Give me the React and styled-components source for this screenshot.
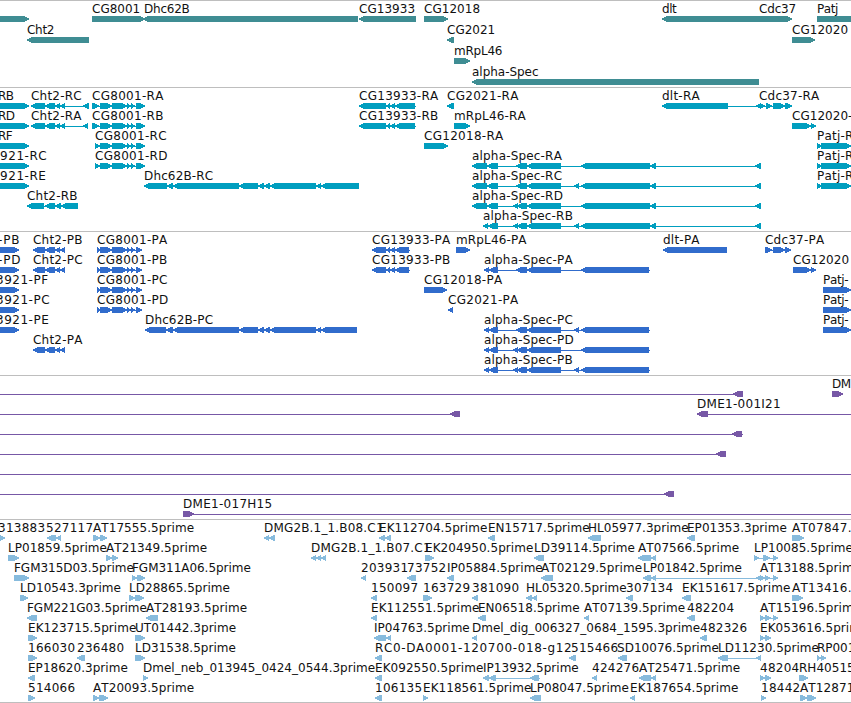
import React from "react";
import styled, { createGlobalStyle } from "styled-components";

const trackTheme = {
  gene: "#3f8d93",
  transcript: "#009ebf",
  protein: "#316ccc",
  clone: "#7758a6",
  est: "#87bbdd",
};

const GlobalStyle = createGlobalStyle`
  body {
    margin: 0;
    background-color: white;
    overflow: hidden;
  }
`;

const StyledBrowser = styled.main`
  display: flex;
  flex-direction: column;
  width: 851px;
  height: 703px;
  overflow: hidden;
  font-family: "DejaVu Sans", sans-serif;
  font-size: 12px;
  font-kerning: none;
  color: black;
`;

const StyledTrack = styled.section`
  box-sizing: border-box;
  flex: none;
  padding-bottom: ${({ $gap }) => $gap}px;
  border-top: 1px solid #bebebe;
  color: ${({ $kind }) => trackTheme[$kind]};
`;

const StyledRow = styled.div`
  display: grid;
  grid-template-rows: 15px 6px;
  height: ${({ $height }) => $height}px;
`;

const StyledLabels = styled.div`
  display: grid;
  grid-template-columns: 851px;
`;

const StyledLabel = styled.span`
  grid-area: 1 / 1;
  justify-self: start;
  line-height: 16px;
  height: 15px;
  color: #111;
  white-space: nowrap;
`;

const StyledGlyphs = styled.svg`
  display: block;
  width: 851px;
  height: 6px;
  fill: currentColor;
  shape-rendering: crispEdges;
`;

const StyledFooter = styled.footer`
  flex: none;
  height: 1px;
  background-color: #bebebe;
`;

// a label starts at x, the thin intron line runs between from and to
const f = (label, x, strand, exons, from, to) => ({
  label,
  x,
  strand,
  exons,
  from: from ?? exons[0][0] + 1,
  to: to ?? exons[exons.length - 1][1] - 1,
});

const cht2 = [[45, 55], [55, 60], [60, 65]];
const cg8001 = [[112, 127], [127, 131], [131, 135]];
const dhc = [[173, 239], [239, 258], [258, 264], [264, 270], [270, 316], [316, 321]];
const cg13933 = [[386, 390], [390, 395]];
const specTail = [[581, 650], [650, 656], [755, 761]];
const left = (label, x, end) => f(label, x, ">", [[-20, end]]);
const cg8001Rna = (label, x) =>
  f(label, x, ">", [[x, x === 92 ? 99 : 100], [100, 112], ...cg8001, [136, 145]]);
const cg8001Prot = (label) =>
  f(label, 97, ">", [[97, 101], [100, 112], ...cg8001, [136, 142]]);
const patj = () => f("Patj-R", 817, ">", [[817, 822], [821, 851]]);
const patjProt = () => f("Patj-", 823, ">", [[823, 851]]);

const tracks = [
  {
    kind: "gene",
    rowHeight: 21,
    gap: 2,
    rows: [
      [
        left("", 0, 29),
        f("CG8001", 92, ">", [[92, 145]]),
        f("Dhc62B", 144, "<", [[143, 358]]),
        f("CG13933", 359, "<", [[359, 416]]),
        f("CG12018", 424, ">", [[424, 448]]),
        f("dlt", 662, "<", [[662, 762]]),
        f("Cdc37", 759, ">", [[759, 792]]),
        f("Patj", 817, ">", [[817, 900]]),
      ],
      [
        f("Cht2", 27, "<", [[27, 89]]),
        f("CG2021", 447, "<", [[447, 454]]),
        f("CG12020", 792, ">", [[792, 815]]),
      ],
      [f("mRpL46", 454, ">", [[454, 470]])],
      [f("alpha-Spec", 472, "<", [[472, 759]])],
    ],
  },
  {
    kind: "transcript",
    rowHeight: 20,
    gap: 3,
    rows: [
      [
        left("RB", -2, 29),
        f("Cht2-RC", 31, "<", [[31, 45], ...cht2, [83, 89]]),
        cg8001Rna("CG8001-RA", 92),
        f("CG13933-RA", 359, "<", [[359, 386], ...cg13933, [395, 415]], 360, 416),
        f("CG2021-RA", 447, "<", [[447, 454]]),
        f("dlt-RA", 662, "<", [[662, 728], [756, 761]]),
        f("Cdc37-RA", 759, ">", [[760, 765], [766, 772], [773, 785], [785, 792]]),
      ],
      [
        left("RD", -2, 29),
        f("Cht2-RA", 31, "<", [[31, 45], ...cht2, [83, 88]]),
        cg8001Rna("CG8001-RB", 92),
        f("CG13933-RB", 359, "<", [[359, 386], ...cg13933, [395, 415]], 360, 416),
        f("mRpL46-RA", 454, ">", [[454, 470]]),
        f("CG12020-", 792, ">", [[792, 811], [811, 816]]),
      ],
      [
        left("RF", -2, 29),
        cg8001Rna("CG8001-RC", 95),
        f("CG12018-RA", 424, ">", [[424, 448]]),
        patj(),
      ],
      [
        left("921-RC", 0, 29),
        cg8001Rna("CG8001-RD", 95),
        f("alpha-Spec-RA", 472, "<", [[472, 487], [487, 498], [516, 527], [527, 561], ...specTail]),
        patj(),
      ],
      [
        left("921-RE", 0, 29),
        f("Dhc62B-RC", 144, "<", [[144, 167], [167, 173], ...dhc, [321, 359]]),
        f("alpha-Spec-RC", 472, "<", [[472, 487], [487, 498], [516, 527], [527, 561], [574, 579], ...specTail]),
        patj(),
      ],
      [
        f("Cht2-RB", 27, "<", [[27, 44], [45, 55], [55, 61], [61, 78]]),
        f("alpha-Spec-RD", 472, "<", [[472, 487], [487, 498], [513, 518], [517, 527], [527, 561], ...specTail]),
      ],
      [
        f("alpha-Spec-RB", 483, "<", [[483, 488], [488, 498], [513, 518], [517, 527], [527, 561], [574, 579], ...specTail]),
      ],
    ],
  },
  {
    kind: "protein",
    rowHeight: 20,
    gap: 3,
    rows: [
      [
        left("-PB", -2, 19),
        f("Cht2-PB", 33, "<", [[33, 45], ...cht2]),
        cg8001Prot("CG8001-PA"),
        f("CG13933-PA", 372, "<", [[372, 386], ...cg13933, [395, 409]], 373, 410),
        f("mRpL46-PA", 456, ">", [[456, 470]]),
        f("dlt-PA", 663, "<", [[663, 727]]),
        f("Cdc37-PA", 765, ">", [[765, 772], [773, 785], [785, 791]]),
      ],
      [
        left("-PD", -2, 19),
        f("Cht2-PC", 33, "<", [[33, 45], ...cht2]),
        cg8001Prot("CG8001-PB"),
        f("CG13933-PB", 372, "<", [[372, 386], ...cg13933, [395, 409]], 373, 410),
        f("alpha-Spec-PA", 484, "<", [[484, 489], [489, 498], [516, 527], [527, 561], [581, 649]], 485, 650),
        f("CG12020", 793, ">", [[793, 811], [811, 816]]),
      ],
      [
        left("3921-PF", -4, 19),
        cg8001Prot("CG8001-PC"),
        f("CG12018-PA", 424, ">", [[424, 447]]),
        patjProt(),
      ],
      [
        left("3921-PC", -4, 19),
        cg8001Prot("CG8001-PD"),
        f("CG2021-PA", 448, "<", [[448, 453]]),
        patjProt(),
      ],
      [
        left("3921-PE", -4, 19),
        f("Dhc62B-PC", 145, "<", [[145, 166], [166, 173], ...dhc, [321, 357]]),
        f("alpha-Spec-PC", 484, "<", [[484, 489], [489, 498], [516, 527], [527, 561], [574, 579], [581, 649]], 485, 650),
        patjProt(),
      ],
      [
        f("Cht2-PA", 33, "<", [[33, 45], ...cht2]),
        f("alpha-Spec-PD", 484, "<", [[484, 489], [489, 498], [513, 518], [517, 527], [527, 561], [581, 649]], 485, 650),
      ],
      [
        f("alpha-Spec-PB", 484, "<", [[484, 489], [489, 498], [513, 518], [517, 527], [527, 561], [574, 579], [581, 649]], 485, 650),
      ],
    ],
  },
  {
    kind: "clone",
    rowHeight: 20,
    gap: 3,
    rows: [
      [
        f("", 0, "<", [[733, 743]], 0),
        f("DM", 832, ">", [[832, 843]]),
      ],
      [
        f("", 0, "<", [[450, 460]], 0),
        f("DME1-001I21", 697, "<", [[697, 708]], 698, 851),
      ],
      [f("", 0, "<", [[732, 742]], 0, 743)],
      [f("", 0, "<", [[716, 726]], 0)],
      [f("", 0, "<", [], 0, 851)],
      [f("", 0, "<", [[664, 674]], 0)],
      [f("DME1-017H15", 183, ">", [[183, 194]], 184, 851)],
    ],
  },
  {
    kind: "est",
    rowHeight: 20,
    gap: 2,
    rows: [
      [
        f("313883", -2, ">", [[-10, 5]]),
        f("527117", 46, "<", [[47, 56], [56, 61]]),
        f("AT17555.5prime", 93, ">", [[93, 100], [100, 107]]),
        f("DMG2B.1_1.B08.C1", 264, "<", [[264, 269], [269, 275]]),
        f("EK112704.5prime", 379, "<", [[379, 385], [385, 391]]),
        f("EN15717.5prime", 488, "<", [[488, 495]]),
        f("HL05977.3prime", 588, "<", [[588, 601]]),
        f("EP01353.3prime", 687, "<", [[687, 695]]),
        f("AT07847.", 792, ">", [[792, 804]]),
      ],
      [
        f("LP01859.5prime", 8, ">", [[8, 19]]),
        f("AT21349.5prime", 106, ">", [[106, 112], [112, 118]]),
        f("DMG2B.1_1.B07.C1", 311, "<", [[311, 316], [316, 321], [321, 326]]),
        f("EK204950.5prime", 425, ">", [[425, 434]]),
        f("LD39114.5prime", 534, "<", [[534, 544]]),
        f("AT07566.5prime", 638, "<", [[638, 651], [651, 656]]),
        f("LP10085.5prime", 754, ">", [[754, 759], [763, 770], [773, 778]]),
      ],
      [
        f("FGM315D03.5prime", 14, ">", [[14, 29]]),
        f("FGM311A06.5prime", 132, ">", [[132, 137], [137, 145]]),
        f("203931", 361, "<", [[361, 366]]),
        f("73752", 407, "<", [[407, 416]]),
        f("IP05884.5prime", 447, "<", [[447, 454]]),
        f("AT02129.5prime", 541, "<", [[541, 553]]),
        f("LP01842.5prime", 643, "<", [[643, 651], [651, 656], [756, 761]]),
        f("AT13188.5prime", 760, ">", [[760, 765], [765, 770], [773, 778]]),
      ],
      [
        f("LD10543.3prime", 20, ">", [[20, 28]]),
        f("LD28865.5prime", 129, ">", [[129, 135], [135, 144]]),
        f("150097", 371, "<", [[371, 377]]),
        f("163729", 423, ">", [[423, 432]]),
        f("381090", 472, "<", [[472, 478]]),
        f("HL05320.5prime", 526, "<", [[526, 532], [532, 537]]),
        f("307134", 626, "<", [[626, 633]]),
        f("EK151617.5prime", 682, "<", [[682, 691]]),
        f("AT13416.", 792, ">", [[792, 803]]),
      ],
      [
        f("FGM221G03.5prime", 27, "<", [[27, 37]]),
        f("AT28193.5prime", 146, "<", [[146, 158]]),
        f("EK112551.5prime", 371, "<", [[371, 377]]),
        f("EN06518.5prime", 478, "<", [[478, 486]]),
        f("AT07139.5prime", 584, "<", [[584, 589]]),
        f("482204", 687, "<", [[687, 695]]),
        f("AT15196.5prime", 760, ">", [[760, 765], [765, 771], [773, 778]]),
      ],
      [
        f("EK123715.5prime", 28, ">", [[28, 37]]),
        f("UT01442.3prime", 135, ">", [[135, 145]]),
        f("IP04763.5prime", 374, "<", [[374, 386], [386, 391]]),
        f("Dmel_dig_006327_0684_1595.3prime", 472, "<", [[472, 477]]),
        f("482326", 700, "<", [[700, 707]]),
        f("EK053616.5prime", 760, ">", [[760, 765], [765, 771]]),
      ],
      [
        f("166030", 28, ">", [[28, 37]]),
        f("236480", 77, "<", [[77, 85]]),
        f("LD31538.5prime", 135, ">", [[135, 145]]),
        f("RC0-DA0001-120700-018-g12", 375, "<", [[375, 382]]),
        f("515466", 571, "<", [[569, 576]]),
        f("SD10076.5prime", 617, "<", [[618, 627]]),
        f("LD11230.5prime", 718, "<", [[718, 728], [756, 761]]),
        f("RP001", 817, ">", [[817, 821], [821, 826]]),
      ],
      [
        f("EP18620.3prime", 28, "<", [[28, 35]]),
        f("Dmel_neb_013945_0424_0544.3prime", 143, ">", [[143, 148]]),
        f("EK092550.5prime", 375, "<", [[375, 382]]),
        f("IP13932.5prime", 483, "<", [[483, 489], [489, 496], [530, 539]], 484, 540),
        f("424276", 592, "<", [[592, 597]]),
        f("AT25471.5prime", 639, "<", [[639, 651], [651, 656]]),
        f("48204", 760, ">", [[760, 765], [765, 771]]),
        f("RH40515", 799, ">", [[799, 808]]),
      ],
      [
        f("514066", 28, ">", [[28, 35]]),
        f("AT20093.5prime", 93, ">", [[93, 99], [99, 108]]),
        f("106135", 375, "<", [[375, 382]]),
        f("EK118561.5prime", 423, ">", [[423, 428]]),
        f("LP08047.5prime", 530, "<", [[530, 541]]),
        f("EK187654.5prime", 630, "<", [[630, 635]]),
        f("18442", 761, ">", [[761, 766]]),
        f("AT12871", 800, ">", [[800, 807], [807, 816]]),
      ],
    ],
  },
];

const count = (label, pattern) => (label.match(pattern) || []).length;

// names with dashes are set wide, all-letter names a little tight
const tracking = (label) =>
  (count(label, /-(?=.)/g) * 3.6 +
    count(label, /\d/g) * 0.25 +
    count(label, /\./g) * 1.4 +
    count(label, /^AT|prime$/g) * 0.6 -
    count(label, /[a-z]/g) * 0.42 -
    count(label, /[A-Z]/g) * 0.5) /
  label.length;

// how far each pixel row of an arrow head is cut back from its tip
const headSteps = [4, 2, 0, 0, 2, 4];

const arrow = ([a, b], strand) =>
  headSteps
    .map((step) => Math.min(step, b - a - 1))
    .map((step, y) =>
      strand === "<"
        ? `M${a + step} ${y}H${b}v1H${a + step}z`
        : `M${a} ${y}H${b - step}v1H${a}z`
    )
    .join("");

const Feature = ({ feature }) => (
  <g>
    {feature.to > feature.from && (
      <rect x={feature.from} y={3} width={feature.to - feature.from} height={1} />
    )}
    {feature.exons.map((exon, i) => (
      <path key={i} d={arrow(exon, feature.strand)} />
    ))}
  </g>
);

const Row = ({ features, height }) => (
  <StyledRow $height={height}>
    <StyledLabels>
      {features
        .filter(({ label }) => label)
        .map(({ label, x }) => (
          <StyledLabel
            key={label}
            style={{ marginLeft: x, letterSpacing: `${tracking(label)}px` }}
          >
            {label}
          </StyledLabel>
        ))}
    </StyledLabels>
    <StyledGlyphs viewBox="0 0 851 6">
      {features.map((feature, i) => (
        <Feature key={i} feature={feature} />
      ))}
    </StyledGlyphs>
  </StyledRow>
);

const App = () => (
  <>
    <GlobalStyle />
    <StyledBrowser>
      {tracks.map(({ kind, rowHeight, gap, rows }) => (
        <StyledTrack key={kind} $kind={kind} $gap={gap}>
          {rows.map((features, i) => (
            <Row key={i} features={features} height={rowHeight} />
          ))}
        </StyledTrack>
      ))}
      <StyledFooter />
    </StyledBrowser>
  </>
);

export default App;
